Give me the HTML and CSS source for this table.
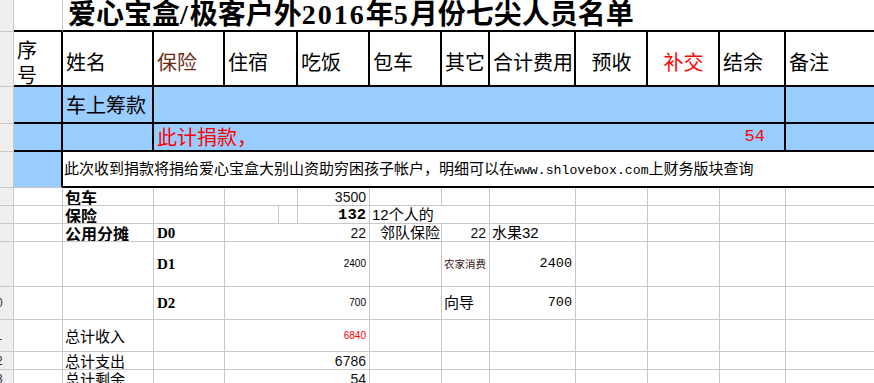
FILE: index.html
```html
<!DOCTYPE html>
<html lang="zh-CN">
<head>
<meta charset="utf-8">
<title>爱心宝盒/极客户外2016年5月份七尖人员名单</title>
<link rel="stylesheet" href="styles.css">
</head>
<body>
<div class="sheet">
  <!-- row 1 : title -->
  <div class="c rh"><span class="rn">1</span></div>
  <div class="c tb"></div>
  <div class="c tb nr s12 title"><span>爱心宝盒<span class="lat">/</span>极客户外<span class="lat">2016</span>年<span class="lat">5</span>月份七尖人员名单</span></div>

  <!-- row 2 : header -->
  <div class="c rh"><span class="rn">2</span></div>
  <div class="c hd"><span class="stack">序<br>号</span></div>
  <div class="c hd">姓名</div>
  <div class="c hd brown">保险</div>
  <div class="c hd s2">住宿</div>
  <div class="c hd">吃饭</div>
  <div class="c hd">包车</div>
  <div class="c hd">其它</div>
  <div class="c hd">合计费用</div>
  <div class="c hd ctr">预收</div>
  <div class="c hd ctr red">补交</div>
  <div class="c hd">结余</div>
  <div class="c hd nr">备注</div>

  <!-- row 3 -->
  <div class="c rh"><span class="rn">3</span></div>
  <div class="c blue tr tb"></div>
  <div class="c blue tr tb big">车上筹款</div>
  <div class="c blue tr tb s10"></div>
  <div class="c blue tb nr"></div>

  <!-- row 4 -->
  <div class="c rh"><span class="rn">4</span></div>
  <div class="c blue tr tb"></div>
  <div class="c blue tr tb"></div>
  <div class="c blue tr tb s10 big red split"><span>此计捐款，</span><span class="red-num">54</span></div>
  <div class="c blue tb nr"></div>

  <!-- row 5 -->
  <div class="c rh"><span class="rn">5</span></div>
  <div class="c blue tr"></div>
  <div class="c tb nr s12 note"><span>此次收到捐款将捐给爱心宝盒大别山资助穷困孩子帐户，明细可以在<span class="url">www.shlovebox.com</span>上财务版块查询</span></div>

  <!-- row 6 -->
  <div class="c rh"><span class="rn">6</span></div>
  <div class="c"></div>
  <div class="c bh">包车</div>
  <div class="c"></div>
  <div class="c s2"></div>
  <div class="c r num">3500</div>
  <div class="c"></div><div class="c"></div><div class="c"></div><div class="c"></div><div class="c"></div><div class="c"></div><div class="c nr"></div>

  <!-- row 7 -->
  <div class="c rh"><span class="rn">7</span></div>
  <div class="c"></div>
  <div class="c bh">保险</div>
  <div class="c"></div>
  <div class="c"></div>
  <div class="c"></div>
  <div class="c r bnum">132</div>
  <div class="c s2 txt">12个人的</div>
  <div class="c"></div><div class="c"></div><div class="c"></div><div class="c"></div><div class="c nr"></div>

  <!-- row 8 -->
  <div class="c rh"><span class="rn">8</span></div>
  <div class="c"></div>
  <div class="c bh">公用分摊</div>
  <div class="c dd">D0</div>
  <div class="c s3 r num">22</div>
  <div class="c txt indent">邻队保险</div>
  <div class="c r num">22</div>
  <div class="c txt">水果32</div>
  <div class="c"></div><div class="c"></div><div class="c"></div><div class="c nr"></div>

  <!-- row 9 -->
  <div class="c rh"><span class="rn">9</span></div>
  <div class="c"></div>
  <div class="c"></div>
  <div class="c dd">D1</div>
  <div class="c s3 r sm">2400</div>
  <div class="c"></div>
  <div class="c smcjk">农家消费</div>
  <div class="c r mono">2400</div>
  <div class="c"></div><div class="c"></div><div class="c"></div><div class="c nr"></div>

  <!-- row 10 -->
  <div class="c rh"><span class="rn">10</span></div>
  <div class="c"></div>
  <div class="c"></div>
  <div class="c dd">D2</div>
  <div class="c s3 r sm">700</div>
  <div class="c"></div>
  <div class="c txt">向导</div>
  <div class="c r mono">700</div>
  <div class="c"></div><div class="c"></div><div class="c"></div><div class="c nr"></div>

  <!-- row 11 -->
  <div class="c rh"><span class="rn">11</span></div>
  <div class="c"></div>
  <div class="c tot">总计收入</div>
  <div class="c"></div>
  <div class="c s3 r sm red">6840</div>
  <div class="c"></div><div class="c"></div><div class="c"></div><div class="c"></div><div class="c"></div><div class="c"></div><div class="c nr"></div>

  <!-- row 12 -->
  <div class="c rh"><span class="rn">12</span></div>
  <div class="c"></div>
  <div class="c tot">总计支出</div>
  <div class="c"></div>
  <div class="c s3 r num">6786</div>
  <div class="c"></div><div class="c"></div><div class="c"></div><div class="c"></div><div class="c"></div><div class="c"></div><div class="c nr"></div>

  <!-- row 13 -->
  <div class="c rh"><span class="rn">13</span></div>
  <div class="c"></div>
  <div class="c tot">总计剩余</div>
  <div class="c"></div>
  <div class="c s3 r num">54</div>
  <div class="c"></div><div class="c"></div><div class="c"></div><div class="c"></div><div class="c"></div><div class="c"></div><div class="c nr"></div>
</div>
</body>
</html>
```

FILE: styles.css
```css
html, body {
  margin: 0;
  padding: 0;
  background: #fff;
  overflow: hidden;
}

body {
  width: 874px;
  height: 383px;
  font-family: "Liberation Sans", "Noto Sans CJK SC", sans-serif;
  color: #000;
}

.sheet {
  display: grid;
  grid-template-columns: 14px 49px 91px 71px 54px 19px 72px 72px 48px 86px 72px 72px 66px 90px;
  grid-template-rows: 32px 55px 37px 28px 36px 18px 18px 18px 45px 33px 32px 18px 18px;
  width: 876px;
}

.c {
  box-sizing: border-box;
  border-right: 1px solid #c8c8c8;
  border-bottom: 1px solid #c8c8c8;
  display: flex;
  align-items: center;
  padding: 0 2px;
  overflow: hidden;
  white-space: nowrap;
  font-size: 14px;
  line-height: 16px;
  min-width: 0;
}

.s2 { grid-column: span 2; }
.s3 { grid-column: span 3; }
.s10 { grid-column: span 10; }
.s12 { grid-column: span 12; }

.tr { border-right: 2px solid #000; }
.tb { border-bottom: 2px solid #000; }
.nr { border-right: none; }

.r { justify-content: flex-end; padding-right: 3px; }
.ctr { justify-content: center; }

.blue { background: #99ccff; }
.red { color: #ff0000; }
.brown { color: #6b2a10; }

/* row headers */
.rh {
  background: #efefef;
  border-right: 1px solid #c8c8c8;
  border-bottom: 1px solid #c8c8c8;
  padding: 0;
  justify-content: flex-start;
}
.rn {
  flex: 0 0 30px;
  margin-left: -19px;
  text-align: center;
  font-family: "Liberation Sans", sans-serif;
  font-size: 12px;
  color: #333;
}

/* title */
.title {
  padding-left: 5px;
  font-family: "Liberation Serif", "Noto Sans CJK SC", serif;
  font-weight: 700;
  font-size: 28px;
  line-height: 30px;
}
.title .lat {
  letter-spacing: 2px;
}

/* header row */
.hd {
  border-right: 2px solid #000;
  border-bottom: 2px solid #000;
  font-family: "Noto Sans CJK SC", sans-serif;
  font-size: 20px;
  line-height: 24px;
  padding-top: 6px;
  padding-left: 3px;
}
.hd.nr { border-right: none; }
.stack {
  display: block;
  line-height: 25px;
  padding-left: 0;
}

.big {
  font-family: "Noto Sans CJK SC", sans-serif;
  font-size: 20px;
  line-height: 24px;
  padding-left: 3px;
}
.split {
  justify-content: space-between;
  padding-right: 19px;
}
.red-num {
  font-family: "Liberation Mono", monospace;
  font-size: 17px;
}

.note {
  padding-left: 1px;
  font-family: "Noto Sans CJK SC", sans-serif;
  font-size: 15px;
  line-height: 18px;
}
.url {
  font-family: "Liberation Mono", monospace;
  font-size: 13.2px;
}

/* lower section */
.bh {
  font-family: "Noto Sans CJK SC", sans-serif;
  font-weight: 700;
  font-size: 16px;
  line-height: 18px;
}
.dd {
  font-family: "Liberation Serif", serif;
  font-weight: 700;
  font-size: 15px;
  padding-left: 3px;
}
.num {
  font-family: "Liberation Sans", sans-serif;
  font-size: 14px;
  color: #111;
}
.bnum {
  font-family: "Liberation Mono", monospace;
  font-weight: 700;
  font-size: 15.5px;
}
.txt {
  font-size: 15px;
}
.indent { padding-left: 10px; }
.sm {
  font-family: "Liberation Sans", sans-serif;
  font-size: 10px;
}
.smcjk {
  font-family: "Noto Sans CJK SC", sans-serif;
  font-size: 10.5px;
  color: #3a1010;
}
.mono {
  font-family: "Liberation Mono", monospace;
  font-size: 13.5px;
}
.tot {
  font-family: "Noto Sans CJK SC", sans-serif;
  font-size: 15px;
  line-height: 18px;
}
```
